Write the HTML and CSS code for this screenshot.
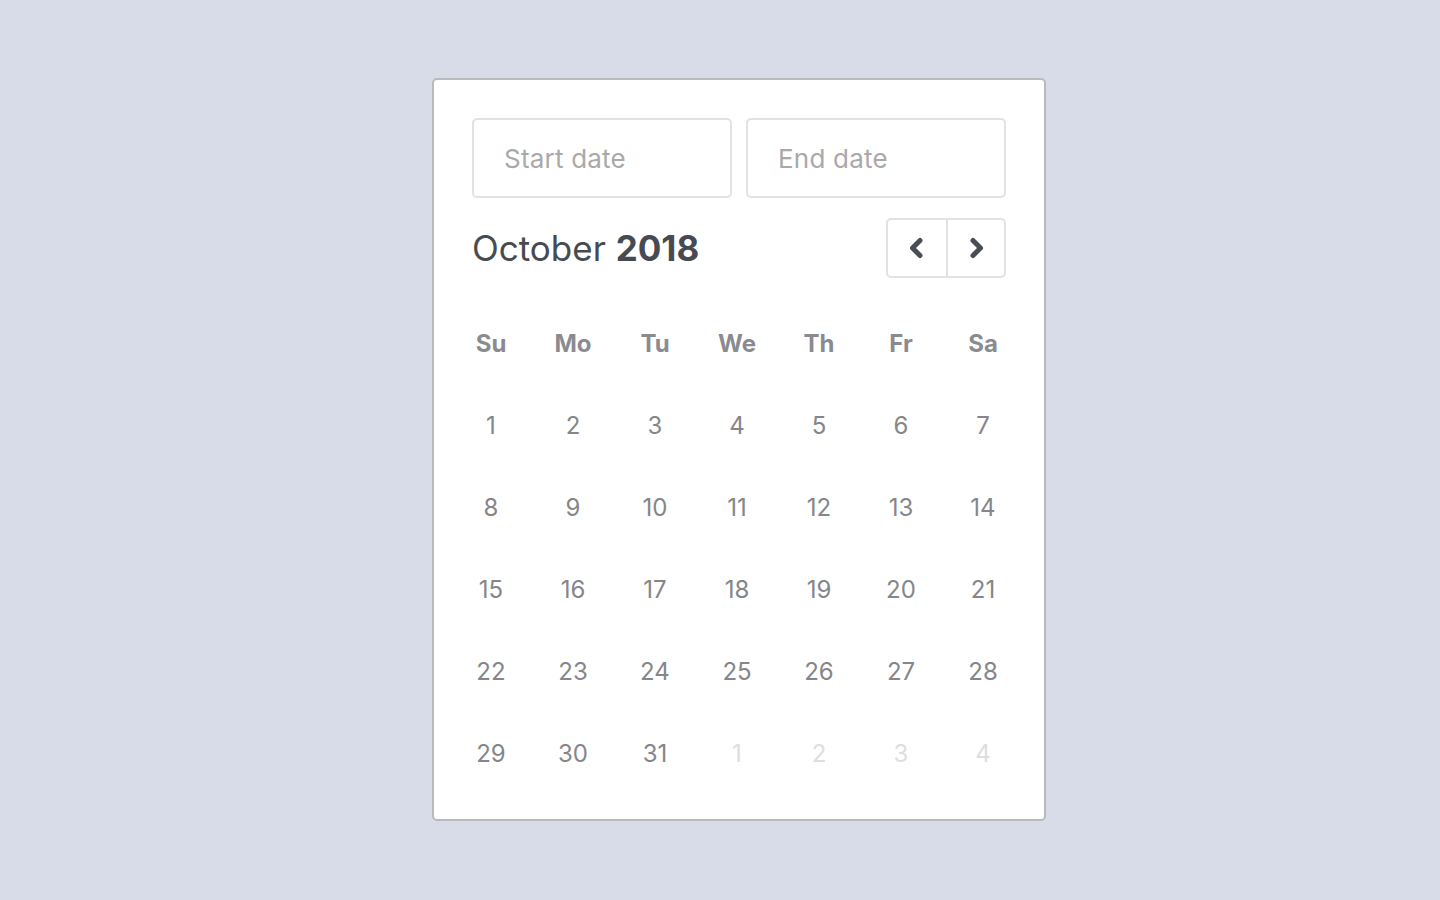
FILE: index.html
```html
<!DOCTYPE html>
<html>
    <head>
        <title>Date Range Picker</title>
        <link rel="stylesheet" href="styles.css">
    </head>
    <body>
        <div class="picker">
            <div class="inputs">
                <input type="text" class="date_input" placeholder="Start date">
                <input type="text" class="date_input" placeholder="End date">
            </div>
            <div class="month_bar">
                <h1 class="month_title">October <b>2018</b></h1>
                <div class="nav">
                    <button type="button" class="nav_btn">
                        <svg width="24" height="24" viewBox="0 0 24 24"><path d="M15 4.5 L7.5 12 L15 19.5" fill="none" stroke="#4a4d55" stroke-width="5" stroke-linecap="round" stroke-linejoin="round"/></svg>
                    </button>
                    <button type="button" class="nav_btn">
                        <svg width="24" height="24" viewBox="0 0 24 24"><path d="M9 4.5 L16.5 12 L9 19.5" fill="none" stroke="#4a4d55" stroke-width="5" stroke-linecap="round" stroke-linejoin="round"/></svg>
                    </button>
                </div>
            </div>
            <div class="days">
                <span class="dow">Su</span><span class="dow">Mo</span><span class="dow">Tu</span><span class="dow">We</span><span class="dow">Th</span><span class="dow">Fr</span><span class="dow">Sa</span>
                <span>1</span><span>2</span><span>3</span><span>4</span><span>5</span><span>6</span><span>7</span>
                <span>8</span><span>9</span><span>10</span><span>11</span><span>12</span><span>13</span><span>14</span>
                <span>15</span><span>16</span><span>17</span><span>18</span><span>19</span><span>20</span><span>21</span>
                <span>22</span><span>23</span><span>24</span><span>25</span><span>26</span><span>27</span><span>28</span>
                <span>29</span><span>30</span><span>31</span>
                <span class="other">1</span><span class="other">2</span><span class="other">3</span><span class="other">4</span>
            </div>
        </div>
    </body>
</html>
```

FILE: styles.css
```css
body {
	margin: 0;
	background: #d8dce8;
	font-family: "Inter", "Open Sans", sans-serif;
	min-height: 100vh;
}
.picker {
	width: 534px;
	margin: 78px 0 0 432px;
	padding: 38px 38px 25px 38px;
	background: #fff;
	border: 2px solid #b9b9be;
	border-radius: 5px;
}
.inputs {
	display: flex;
	gap: 14px;
}
.date_input {
	width: 260px;
	height: 80px;
	box-sizing: border-box;
	border: 2px solid #e2e2e2;
	border-radius: 5px;
	padding: 0 0 0 30px;
	font-family: inherit;
	font-size: 26px;
	letter-spacing: 0.2px;
	color: #444;
	outline: none;
}
.date_input::placeholder {
	color: #a9a9a9;
}
.month_bar {
	display: flex;
	justify-content: space-between;
	align-items: center;
	margin-top: 20px;
}
.month_title {
	margin: 0;
	font-size: 35px;
	font-weight: 400;
	color: #474a52;
}
.month_title b {
	font-weight: 700;
}
.nav {
	display: flex;
	border: 2px solid #e2e2e2;
	border-radius: 5px;
	height: 56px;
}
.nav_btn {
	width: 58px;
	border: none;
	background: none;
	padding: 0;
	display: flex;
	align-items: center;
	justify-content: center;
	cursor: pointer;
}
.nav_btn + .nav_btn {
	border-left: 2px solid #e2e2e2;
}
.days {
	display: grid;
	grid-template-columns: repeat(7, 82px);
	grid-auto-rows: 82px;
	margin: 24px -20px 0 -22px;
}
.days span {
	display: flex;
	align-items: center;
	justify-content: center;
	font-size: 24px;
	color: #85868a;
}
.days .dow {
	font-weight: 700;
	color: #8a8b90;
}
.days .other {
	color: #dedede;
}
```
